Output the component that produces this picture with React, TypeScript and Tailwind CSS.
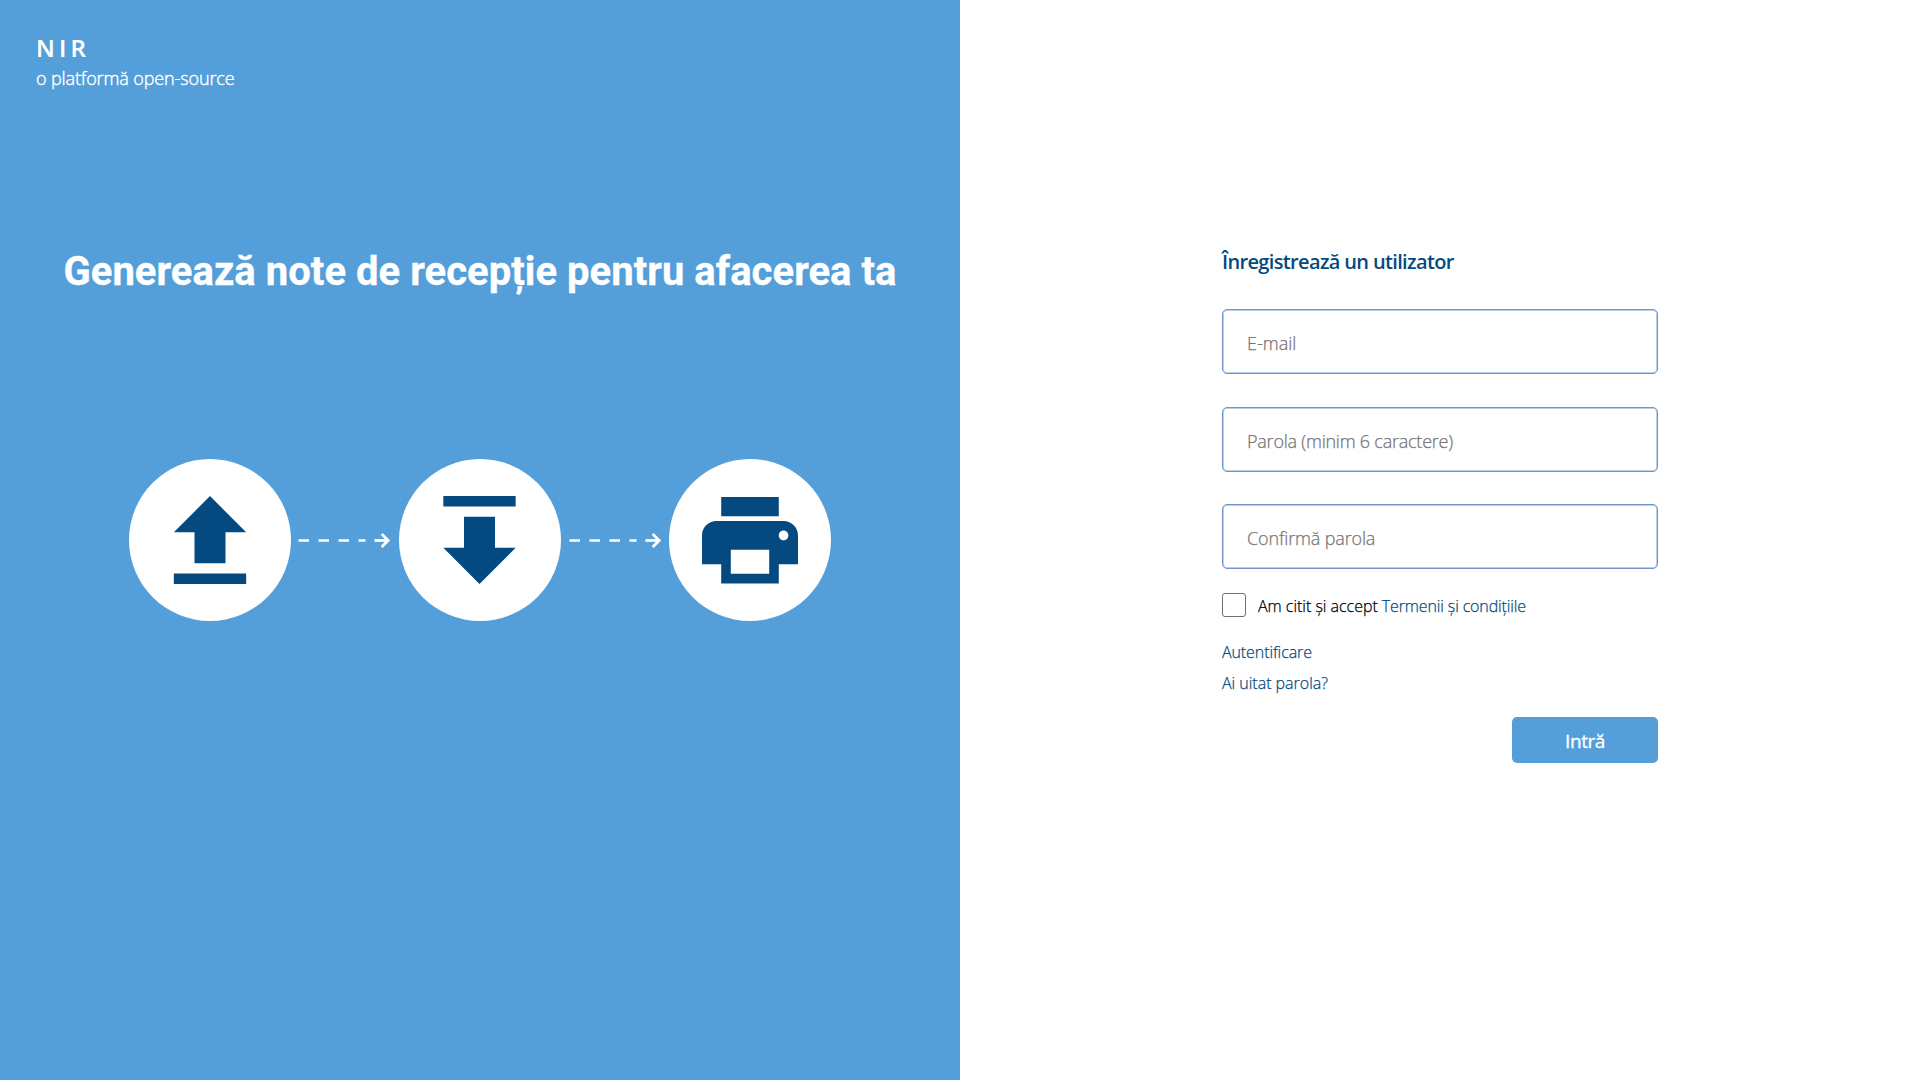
import type { ReactNode } from "react";

function Circle({ children }: { children: ReactNode }) {
  return (
    <div className="flex h-[162px] w-[162px] shrink-0 items-center justify-center rounded-full bg-white text-[#044a80]">
      {children}
    </div>
  );
}

function DashedArrow({ className }: { className: string }) {
  return (
    <svg
      width="108"
      height="20"
      viewBox="0 0 108 20"
      fill="none"
      stroke="currentColor"
      className={`shrink-0 text-white ${className}`}
    >
      <path d="M7.5 10.5h10.5M27.5 10.5h10.5M47.5 10.5h10.5M67.5 10.5h7" strokeWidth="2.4" />
      <path d="M83.5 10.5H97" strokeWidth="2.8" />
      <path d="M90.7 4l6.5 6.5-6.5 6.5" strokeWidth="2.8" />
    </svg>
  );
}

function UploadIcon() {
  return (
    <svg width="124" height="124" viewBox="0 0 24 24" fill="currentColor">
      <path d="M9 16.5h6v-6h4l-7-7-7 7h4zM5 18.5h14v2H5z" />
    </svg>
  );
}

function DownloadIcon() {
  return (
    <svg width="124" height="124" viewBox="0 0 24 24" fill="currentColor" className="-translate-x-[0.5px]">
      <path d="M5 3.5h14v2H5zM9 7.5v6H5l7 7 7-7h-4v-6z" />
    </svg>
  );
}

function PrintIcon() {
  return (
    <svg width="115.2" height="115.2" viewBox="0 0 24 24" fill="currentColor" className="translate-x-[0.4px] translate-y-[0.6px]">
      <path d="M19 8H5c-1.66 0-3 1.34-3 3v6h4v4h12v-4h4v-6c0-1.66-1.34-3-3-3zm-3 11H8v-5h8v5zm3-7c-.55 0-1-.45-1-1s.45-1 1-1 1 .45 1 1-.45 1-1 1zm-1-9H6v4h12V3z" />
    </svg>
  );
}

function Field({ type, placeholder, className }: { type: string; placeholder: string; className: string }) {
  return (
    <input
      type={type}
      placeholder={placeholder}
      className={`h-[65px] w-full rounded-[5px] border border-[#7096c8] bg-white px-6 pt-[3px] text-lg text-black shadow-[inset_0_0_0_1px_#b9cde6] outline-none [-webkit-text-stroke:0.25px] placeholder:text-[#757575] ${className}`}
    />
  );
}

export default function App() {
  return (
    <div className="flex h-screen w-full bg-white font-['Open_Sans',sans-serif] font-light">
      <section className="flex w-[960px] shrink-0 flex-col bg-[#549fda] text-white">
        <header className="px-9 pt-8">
          <div className="text-2xl font-semibold tracking-[4.2px] [-webkit-text-stroke:0.2px]">NIR</div>
          <div className="text-lg leading-7 tracking-[-0.12px] [-webkit-text-stroke:0.4px]">o platformă open-source</div>
        </header>
        <h1 className="mt-[156px] text-center font-['Roboto',sans-serif] text-[40px] leading-[48px] font-bold tracking-[0.04px] [-webkit-text-stroke:0.3px]">
          Generează note de recepție pentru afacerea ta
        </h1>
        <div className="mt-[163px] flex items-center justify-center">
          <Circle>
            <UploadIcon />
          </Circle>
          <DashedArrow className="" />
          <Circle>
            <DownloadIcon />
          </Circle>
          <DashedArrow className="translate-x-px" />
          <Circle>
            <PrintIcon />
          </Circle>
        </div>
      </section>
      <main className="flex flex-1 flex-col items-center pt-[246px]">
        <form className="flex w-[436px] flex-col" onSubmit={(e) => e.preventDefault()}>
          <h2 className="text-xl leading-8 font-semibold tracking-[-0.65px] text-[#044a80]">Înregistrează un utilizator</h2>
          <Field type="email" placeholder="E-mail" className="mt-[31px]" />
          <Field type="text" placeholder="Parola (minim 6 caractere)" className="mt-[33px] tracking-[-0.23px]" />
          <Field type="text" placeholder="Confirmă parola" className="mt-8 tracking-[-0.14px]" />
          <div className="mt-[23px] flex items-center gap-3 [-webkit-text-stroke:0.25px]">
            <input
              type="checkbox"
              aria-label="Accept"
              className="h-6 w-6 appearance-none rounded-[3px] border border-[#6f6f6f] bg-white"
            />
            <div className="flex gap-1 pt-0.5 leading-6">
              <span className="tracking-[-0.02px]">Am citit și accept</span>
              <a className="tracking-[-0.13px] text-[#044a80]">Termenii și condițiile</a>
            </div>
          </div>
          <a className="mt-[22px] leading-6 tracking-[-0.1px] text-[#044a80] [-webkit-text-stroke:0.25px]">Autentificare</a>
          <a className="mt-[7px] leading-6 tracking-[-0.02px] text-[#044a80] [-webkit-text-stroke:0.25px]">Ai uitat parola?</a>
          <button className="mt-[22px] h-[46px] w-[146px] self-end rounded-[5px] bg-[#549fda] pt-0.5 text-[19px] font-normal tracking-[-0.4px] text-white [-webkit-text-stroke:0.3px]">
            Intră
          </button>
        </form>
      </main>
    </div>
  );
}
